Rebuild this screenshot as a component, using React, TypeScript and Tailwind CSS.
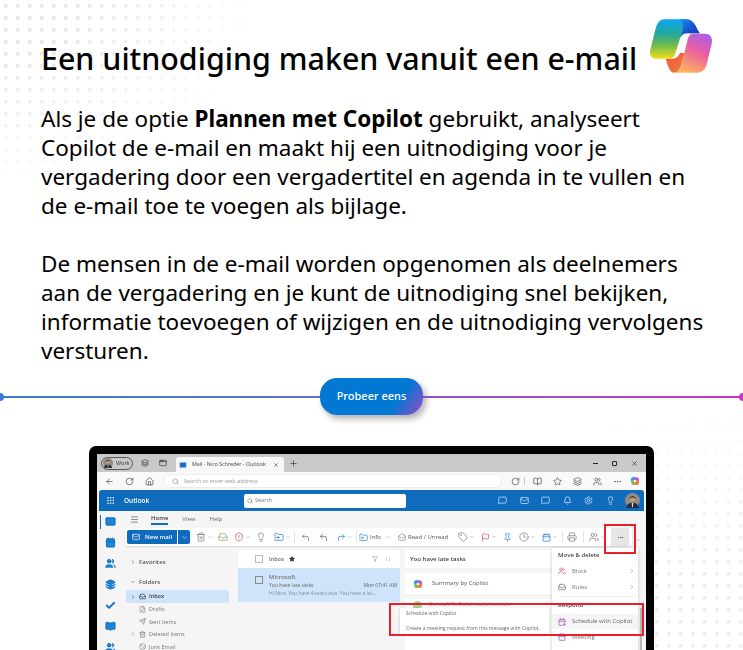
import {
  AppWindow,
  ArrowLeft,
  Ban,
  Bell,
  BookOpen,
  Calendar,
  CalendarPlus,
  Check,
  ChevronDown,
  ChevronRight,
  Clock,
  CornerUpLeft,
  CornerUpRight,
  Ellipsis,
  FileEdit,
  Filter,
  Flag,
  FolderInput,
  Grip,
  Home,
  Inbox,
  Layers,
  Lightbulb,
  Mail,
  MailOpen,
  Menu,
  MessageSquare,
  Pin,
  Plus,
  Printer,
  RotateCw,
  Search,
  Send,
  Settings,
  ShieldAlert,
  Star,
  Tag,
  Trash2,
  Users,
  X,
} from "lucide-react";

function CopilotLogo({ className }: { className: string }) {
  return (
    <svg className={className} viewBox="84 56 194 166">
      <defs>
        <linearGradient id="left" x1="0" y1="0" x2="0" y2="1">
          <stop offset="0" stopColor="#0ea5f5" />
          <stop offset="0.35" stopColor="#22a7a0" />
          <stop offset="0.65" stopColor="#6cbb4c" />
          <stop offset="1" stopColor="#f2df1a" />
        </linearGradient>
        <linearGradient id="top" x1="0" y1="0" x2="1" y2="1">
          <stop offset="0" stopColor="#1b8fe8" />
          <stop offset="0.6" stopColor="#1848cc" />
          <stop offset="1" stopColor="#2a3fb8" />
        </linearGradient>
        <linearGradient id="right" x1="0.8" y1="0" x2="0.35" y2="1">
          <stop offset="0" stopColor="#ab5ee6" />
          <stop offset="0.45" stopColor="#ec5f9f" />
          <stop offset="1" stopColor="#ffb45c" />
        </linearGradient>
        <linearGradient id="low" x1="0" y1="0" x2="1" y2="1">
          <stop offset="0" stopColor="#f2552f" />
          <stop offset="1" stopColor="#ee7d4c" />
        </linearGradient>
      </defs>
      <path d="M135 178H150C165 178 172 172 178 160H192L183 192C178 210 172 220 160 220C148 220 142 205 135 178Z" fill="url(#low)" />
      <path d="M218 102H254C270 102 278 114 274 132L259 194C255 211 242 220 226 220H160C174 220 180 205 184 190L200 124C203 110 208 102 218 102Z" fill="url(#right)" />
      <path d="M130 58H196C214 58 224 72 231 90L238 100H198C186 100 180 108 176 122L163 164C159 175 150 178 141 178H106C92 178 84 166 88 150L104 86C109 68 118 58 130 58Z" fill="url(#left)" />
      <path d="M178 58H196C214 58 224 72 231 90L238 100H198C190 100 184 104 180 112C188 92 192 70 178 58Z" fill="url(#top)" />
    </svg>
  );
}

function DotField({ id, className, cx, cy, r, color }: { id: string; className: string; cx: string; cy: string; r: string; color: string }) {
  return (
    <svg className={className}>
      <defs>
        <pattern id={`${id}-p`} x="4" y="4" width="12" height="12" patternUnits="userSpaceOnUse">
          <rect width="3.500" height="3.500" fill={color} />
        </pattern>
        <radialGradient id={`${id}-g`} cx={cx} cy={cy} r={r}>
          <stop offset="0.3" stopColor="#fff" />
          <stop offset="1" stopColor="#000" />
        </radialGradient>
        <mask id={`${id}-m`}>
          <rect width="100%" height="100%" fill={`url(#${id}-g)`} />
        </mask>
      </defs>
      <rect width="100%" height="100%" fill={`url(#${id}-p)`} mask={`url(#${id}-m)`} />
    </svg>
  );
}

function Avatar({ className }: { className: string }) {
  return (
    <svg className={className} viewBox="0 0 20 20">
      <circle cx="10" cy="10" r="10" fill="#8d8d88" />
      <path d="M2 20C3 14 6 13 10 13C14 13 17 14 18 20Z" fill="#2a2c33" />
      <path d="M9 13H11L10.500 19H9.500Z" fill="#e8e8e8" />
      <circle cx="10" cy="8" r="3.600" fill="#c79a7e" />
      <path d="M6 8C5.500 3 14.500 3 14 8C13 5.500 7 5.500 6 8Z" fill="#22201f" />
    </svg>
  );
}

function CopilotDot({ className }: { className: string }) {
  return (
    <svg className={className} viewBox="0 0 16 16">
      <circle cx="6" cy="6" r="4.500" fill="#2f9be8" />
      <circle cx="10.500" cy="6" r="4" fill="#a95ee0" />
      <circle cx="6" cy="10.500" r="4" fill="#7cc043" />
      <circle cx="10.500" cy="10.500" r="4" fill="#f2783f" />
      <circle cx="8" cy="8" r="2" fill="#ffffff" />
    </svg>
  );
}

function Ribbon() {
  const muted = "h-[10px] w-[10px] text-[#8a8a8a]";
  const caret = "h-[6px] w-[6px] text-[#9a9a9a]";
  const sep = "h-[12px] w-px bg-[#e6e6e6]";
  return (
    <div className="ml-[5px] flex h-[18px] items-center">
      <div className="flex h-[18px] w-[507px] items-center rounded-[3px] bg-white pl-[2px] shadow-[0_1px_2px_rgba(0,0,0,0.12)]">
        <div className="flex h-[14px] w-[50px] items-center gap-[5px] rounded-l-[2px] bg-[#0f6cbd] pl-[5px] text-[6px] font-semibold text-white">
          <Mail className="h-[8px] w-[8px]" />
          New mail
        </div>
        <div className="ml-px flex h-[14px] w-[12px] items-center justify-center rounded-r-[2px] bg-[#0f6cbd]">
          <ChevronDown className="h-[7px] w-[7px] text-white" />
        </div>
        <Trash2 className={`ml-[6px] ${muted}`} />
        <ChevronDown className={`ml-px ${caret}`} />
        <Inbox className="ml-[5px] h-[10px] w-[10px] text-[#8fb96a]" />
        <ShieldAlert className="ml-[6px] h-[10px] w-[10px] text-[#c9606a]" />
        <ChevronDown className={`ml-px ${caret}`} />
        <Lightbulb className={`ml-[5px] ${muted}`} />
        <FolderInput className="ml-[8px] h-[10px] w-[10px] text-[#3c8dd4]" />
        <ChevronDown className={`ml-px ${caret}`} />
        <div className={`ml-[3px] mr-[6px] ${sep}`} />
        <CornerUpLeft className="h-[9px] w-[9px] text-[#a05cb5]" />
        <CornerUpLeft className="ml-[9px] h-[9px] w-[9px] text-[#8a4aa5]" />
        <CornerUpRight className="ml-[9px] h-[9px] w-[9px] text-[#3c8dd4]" />
        <ChevronDown className={`ml-px ${caret}`} />
        <div className={`ml-[3px] mr-[2px] ${sep}`} />
        <FolderInput className="h-[9px] w-[9px] text-[#3c8dd4]" />
        <span className="ml-[2px] w-[11px] text-[6px] text-[#555555]">Info</span>
        <ChevronDown className={`ml-[4px] ${caret}`} />
        <MailOpen className="ml-[7px] h-[8px] w-[8px] text-[#8a8a8a]" />
        <span className="ml-[2px] w-[40px] whitespace-nowrap text-[6px] text-[#555555]">Read / Unread</span>
        <Tag className={`ml-[10px] ${muted}`} />
        <ChevronDown className={`ml-px ${caret}`} />
        <Flag className="ml-[6px] h-[9px] w-[9px] text-[#d0566a]" />
        <ChevronDown className={`ml-px ${caret}`} />
        <Pin className="ml-[6px] h-[9px] w-[9px] text-[#3c8dd4]" />
        <Clock className={`ml-[7px] ${muted}`} />
        <ChevronDown className={`ml-px ${caret}`} />
        <Calendar className="ml-[6px] h-[9px] w-[9px] text-[#2f7fd0]" />
        <ChevronDown className={`ml-px ${caret}`} />
        <div className={`ml-[4px] mr-[4px] ${sep}`} />
        <Printer className={muted} />
        <div className={`ml-[6px] mr-[5px] ${sep}`} />
        <Users className={muted} />
        <ChevronDown className={`ml-px ${caret}`} />
        <div className="ml-[5px] flex h-[18px] w-[18px] items-center justify-center bg-[#e6e6e6]">
          <Ellipsis className="h-[7px] w-[7px] text-[#555555]" />
        </div>
      </div>
      <ChevronDown className="ml-[3px] mt-[5px] h-[6px] w-[6px] text-[#999999]" />
    </div>
  );
}

function FolderRow({ label, icon, caret }: { label: string; icon: React.ReactNode; caret?: boolean }) {
  return (
    <div className="flex h-[12.500px] items-center text-[5.500px] font-normal text-[#777777]">
      <span className="flex w-[13px] justify-center">
        {caret && <ChevronRight className="h-[6px] w-[6px] text-[#777777]" />}
      </span>
      <span className="mr-[3px] flex w-[7px]">{icon}</span>
      {label}
    </div>
  );
}

function OutlookShot() {
  const rail = "h-[11px] w-[11px] fill-[#1b84d8] text-[#0f6cbd]";
  const bar = "h-[9px] w-[9px] text-[#cfe2f5]";
  const tool = "h-[9px] w-[9px] text-[#555555]";
  const small = "h-[7px] w-[7px] text-[#777777]";
  return (
    <div className="mx-[89px] h-[260px] w-[565px] rounded-t-[7px] bg-black px-[8px] pt-[8px] blur-[0.4px]">
      <div className="relative flex h-full flex-col bg-[#f5f5f5] font-['Open_Sans',sans-serif]">
        <div className="flex h-[18px] items-center bg-[#c9c9c9] pl-[4px]">
          <div className="flex h-[13px] w-[32px] items-center gap-[3px] rounded-full border border-[#555555] pl-px text-[5.500px] text-[#333333]">
            <Avatar className="h-[10px] w-[10px]" />
            Work
          </div>
          <Layers className="ml-[8px] h-[8px] w-[8px] text-[#333333]" />
          <AppWindow className="ml-[10px] h-[8px] w-[8px] text-[#333333]" />
          <div className="ml-[9px] flex h-[15px] w-[108px] items-center self-end rounded-t-[3px] bg-[#f7f7f7] pl-[3px] text-[5.300px] text-[#444444]">
            <Mail className="mr-[5px] h-[8px] w-[8px] fill-[#1b6ec2] text-[#bcd8f2]" />
            Mail - Nico Schreder - Outlook
            <X className="ml-auto mr-[5px] h-[6px] w-[6px] text-[#333333]" />
          </div>
          <Plus className="ml-[5px] h-[9px] w-[9px] text-[#444444]" />
          <div className="ml-auto flex items-center gap-[14px] pr-[8px]">
            <span className="h-px w-[5px] bg-[#222222]" />
            <span className="h-[5px] w-[5px] rounded-[1px] border border-[#222222]" />
            <X className="h-[7px] w-[7px] text-[#222222]" />
          </div>
        </div>
        <div className="flex h-[18px] items-center bg-[#f9f9f9] pl-[8px]">
          <ArrowLeft className={tool} />
          <RotateCw className={`ml-[11px] ${tool}`} />
          <Home className={`ml-[11px] ${tool}`} />
          <div className="ml-[9px] flex h-[14px] w-[339px] items-center rounded-full border border-[#ececec] bg-white pl-[8px] text-[5.500px] text-[#999999]">
            <Search className="mr-[5px] h-[7px] w-[7px] text-[#888888]" />
            Search or enter web address
          </div>
          <RotateCw className={`ml-[9px] ${tool}`} />
          <div className="mx-[4px] h-[8px] w-px bg-[#cccccc]" />
          <BookOpen className={`ml-[4px] ${tool}`} />
          <Star className={`ml-[11px] ${tool}`} />
          <Layers className={`ml-[11px] ${tool}`} />
          <Users className={`ml-[11px] ${tool}`} />
          <Ellipsis className={`ml-[11px] ${tool}`} />
          <CopilotDot className="ml-[8px] h-[10px] w-[10px]" />
        </div>
        <div className="ml-[2px] flex h-[21px] w-[545px] items-center rounded-t-[3px] bg-[#0f6cbd] pl-[7px] text-white">
          <Grip className="h-[9px] w-[9px]" />
          <span className="ml-[9px] w-[25px] text-[6.500px] font-semibold">Outlook</span>
          <div className="ml-[95px] flex h-[14px] w-[162px] items-center rounded-[2px] bg-white pl-[3px] text-[5.500px] text-[#777777]">
            <Search className="mr-[2px] h-[6px] w-[6px] text-[#666666]" />
            Search
          </div>
          <MessageSquare className={`ml-[92px] ${bar}`} />
          <Mail className={`ml-[12.500px] ${bar}`} />
          <MessageSquare className={`ml-[12.500px] ${bar}`} />
          <Bell className={`ml-[12.500px] ${bar}`} />
          <Settings className={`ml-[12.500px] ${bar}`} />
          <Lightbulb className={`ml-[12.500px] ${bar}`} />
          <Avatar className="ml-[10px] h-[15px] w-[15px]" />
        </div>
        <div className="flex min-h-0 flex-1">
          <div className="relative flex w-[23px] shrink-0 flex-col items-center gap-[10px] pl-[3px] pt-[5px]">
            <span className="absolute left-[3px] top-[4px] h-[14px] w-[1px] bg-[#0f6cbd]" />
            <Mail className={rail} />
            <Calendar className={rail} />
            <Users className={rail} />
            <Layers className={rail} />
            <Check className="h-[11px] w-[11px] text-[#1b6ec2]" strokeWidth={4} />
            <BookOpen className={rail} />
            <Users className={rail} />
          </div>
          <div className="flex min-w-0 flex-1 flex-col">
            <div className="flex h-[17px] items-center pl-[10px] text-[6px] text-[#666666]">
              <Menu className="mr-[12px] h-[9px] w-[9px] text-[#666666]" />
              <span className="border-b-2 border-[#0f6cbd] font-semibold text-[#333333]">Home</span>
              <span className="ml-[14px]">View</span>
              <span className="ml-[14px]">Help</span>
            </div>
            <Ribbon />
            <div className="flex min-h-0 flex-1 pt-[4px]">
              <div className="w-[118px] shrink-0 pl-[6px] text-[6px] font-semibold text-[#555555]">
                <div className="mt-[5px] flex h-[14px] items-center">
                  <span className="flex w-[13px] justify-center">
                    <ChevronRight className="h-[6px] w-[6px]" />
                  </span>
                  Favorites
                </div>
                <div className="mt-[6px] flex h-[14px] items-center">
                  <span className="flex w-[13px] justify-center">
                    <ChevronDown className="h-[6px] w-[6px]" />
                  </span>
                  Folders
                </div>
                <div className="mt-[1px] flex h-[13px] w-[103px] items-center rounded-[2px] bg-[#cfe4fa] text-[5.500px] text-[#333333]">
                  <span className="flex w-[13px] justify-center">
                    <ChevronRight className="h-[6px] w-[6px]" />
                  </span>
                  <Inbox className="mr-[3px] h-[7px] w-[7px] text-[#222222]" />
                  Inbox
                </div>
                <FolderRow label="Drafts" icon={<FileEdit className={small} />} />
                <FolderRow label="Sent Items" icon={<Send className={small} />} />
                <FolderRow label="Deleted Items" caret icon={<Trash2 className={small} />} />
                <FolderRow label="Junk Email" icon={<Ban className={small} />} />
              </div>
              <div className="w-[162px] shrink-0 text-[#666666]">
                <div className="flex h-[18px] items-center rounded-t-[2px] bg-white pl-[17px] pr-[9px] text-[5.500px] font-semibold">
                  <span className="mr-[6px] h-[8px] w-[8px] border border-[#bbbbbb]" />
                  Inbox
                  <Star className="ml-[5px] h-[6px] w-[6px] fill-[#333333] text-[#333333]" />
                  <Filter className="ml-auto h-[6px] w-[6px] text-[#888888]" />
                  <span className="ml-[7px] text-[6px] leading-none text-[#888888]">↑↓</span>
                </div>
                <div className="flex h-[34px] bg-[#cfe4fa] pl-[17px] pr-[3px] pt-[5px]">
                  <span className="mr-[6px] mt-[3px] h-[8px] w-[8px] border border-[#8a8a8a]" />
                  <div className="min-w-0 flex-1 text-[5px] leading-[8px]">
                    <div className="text-[6px] text-[#555555]">Microsoft</div>
                    <div className="flex justify-between">
                      <span>You have late tasks</span>
                      <span>Mon 07:41 AM</span>
                    </div>
                    <div className="truncate text-[#7a8ca0]">Hi Nico. You have 4 tasks due. You have a lat...</div>
                  </div>
                </div>
              </div>
              <div className="ml-[5px] flex w-[150px] shrink-0 flex-col gap-[5px]">
                <div className="flex h-[18px] items-center rounded-[2px] bg-white pl-[5px] text-[6px] font-semibold text-[#444444]">
                  You have late tasks
                </div>
                <div className="flex h-[21px] items-center rounded-[2px] bg-white pl-[8px] text-[6px] text-[#555555]">
                  <CopilotDot className="mr-[9px] h-[10px] w-[10px]" />
                  Summary by Copilot
                </div>
                <div className="flex flex-1 items-start gap-[6px] rounded-[2px] bg-white pl-[8px] pt-[2px] text-[5px] text-[#888888]">
                  <span className="h-[9px] w-[9px] rounded-full bg-[#9fd39a]" />
                  <span className="truncate">Microsoft To Do late tasks reminder</span>
                </div>
              </div>
            </div>
          </div>
        </div>

        <div className="absolute left-[455px] top-[94px] h-[110px] w-[86px] bg-white pl-[6px] text-[6px] text-[#777777] shadow-[0_1px_4px_rgba(0,0,0,0.2)]">
          <div className="mt-[3px] font-semibold text-[#444444]">Move &amp; delete</div>
          <div className="mt-[4px] flex h-[14px] items-center">
            <Users className="mr-[6px] h-[8px] w-[8px] text-[#c9606a]" />
            Block
            <ChevronRight className="ml-auto mr-[3px] h-[6px] w-[6px]" />
          </div>
          <div className="mt-[2px] flex h-[14px] items-center">
            <Inbox className="mr-[6px] h-[8px] w-[8px] text-[#666666]" />
            Rules
            <ChevronRight className="ml-auto mr-[3px] h-[6px] w-[6px]" />
          </div>
          <div className="mr-[3px] mt-[2px] h-px bg-[#eeeeee]" />
          <div className="mt-[3.500px] font-semibold text-[#444444]">Respond</div>
          <div className="-ml-[6px] mt-[4.500px] flex h-[15px] items-center bg-[#f5f5f5] pl-[6px] text-[#666666]">
            <CalendarPlus className="mr-[6px] h-[8px] w-[8px] text-[#a83fb8]" />
            Schedule with Copilot
          </div>
          <div className="mt-px flex h-[14px] items-center">
            <Calendar className="mr-[6px] h-[8px] w-[8px] text-[#8a3fc8]" />
            Meeting
          </div>
        </div>
        <div className="absolute left-[543px] top-[154px] h-[60px] w-[2px] bg-[#b5b5b5]" />
        <div className="absolute left-[303px] top-[154px] flex h-[26px] w-[149px] flex-col justify-between bg-white px-[6px] py-[2px] text-[5px] text-[#666666] shadow-[0_1px_3px_rgba(0,0,0,0.2)]">
          <span>Schedule with Copilot</span>
          <span className="whitespace-nowrap">Create a meeting request from this message with Copilot.</span>
        </div>
        <div className="absolute left-[507px] top-[70px] h-[30px] w-[32px] border-2 border-[#e8202e]" />
        <div className="absolute left-[292px] top-[149px] h-[33px] w-[255px] border-2 border-[#e8202e]" />
      </div>
    </div>
  );
}

export default function App() {
  return (
    <div className="relative h-[650px] w-[743px] overflow-hidden bg-white font-['Noto_Sans',sans-serif] text-black">
      <DotField id="tl" className="absolute left-0 top-0 h-[190px] w-[260px]" cx="0" cy="0" r="1" color="#e6e6e6" />
      <DotField id="br" className="absolute right-0 top-[400px] h-[250px] w-[440px]" cx="1" cy="1" r="1" color="#eeeeee" />

      <div className="relative">
        <div className="flex h-[100px] items-start pl-[41px]">
          <h1 className="mt-[40px] whitespace-nowrap text-[30.400px] font-medium leading-[38px]">
            Een uitnodiging maken vanuit een e-mail
          </h1>
          <CopilotLogo className="ml-auto mr-[30px] mt-[18px] h-[56px] w-[64px]" />
        </div>
        <div className="pl-[41px] pt-[4px] text-[22.500px] leading-[29px]">
          <p>
            Als je de optie <b className="font-bold">Plannen met Copilot</b> gebruikt, analyseert
            <br />
            Copilot de e-mail en maakt hij een uitnodiging voor je
            <br />
            vergadering door een vergadertitel en agenda in te vullen en
            <br />
            de e-mail toe te voegen als bijlage.
          </p>
          <p className="mt-[29px]">
            De mensen in de e-mail worden opgenomen als deelnemers
            <br />
            aan de vergadering en je kunt de uitnodiging snel bekijken,
            <br />
            informatie toevoegen of wijzigen en de uitnodiging vervolgens
            <br />
            versturen.
          </p>
        </div>

        <div className="mt-[13px] flex h-[37px] items-center">
          <div className="relative h-[2px] flex-1 bg-gradient-to-r from-[#3a7ad6] to-[#5f6ed2]">
            <span className="absolute -left-[4px] -top-[3px] h-[8px] w-[8px] rounded-full bg-[#3a7ad6]" />
          </div>
          <button className="flex h-[37px] w-[103px] items-center justify-center rounded-[17px] bg-[linear-gradient(125deg,#0078d4_72%,#9a48c6_100%)] text-[11px] font-medium text-white shadow-[3px_4px_6px_rgba(0,0,0,0.3)]">
            Probeer eens
          </button>
          <div className="relative h-[2px] flex-1 bg-gradient-to-r from-[#8454ce] to-[#cd33c4]">
            <span className="absolute -right-[4px] -top-[3px] h-[8px] w-[8px] rounded-full bg-[#cd33c4]" />
          </div>
        </div>

        <div className="mt-[31px]">
          <OutlookShot />
        </div>
      </div>
    </div>
  );
}
